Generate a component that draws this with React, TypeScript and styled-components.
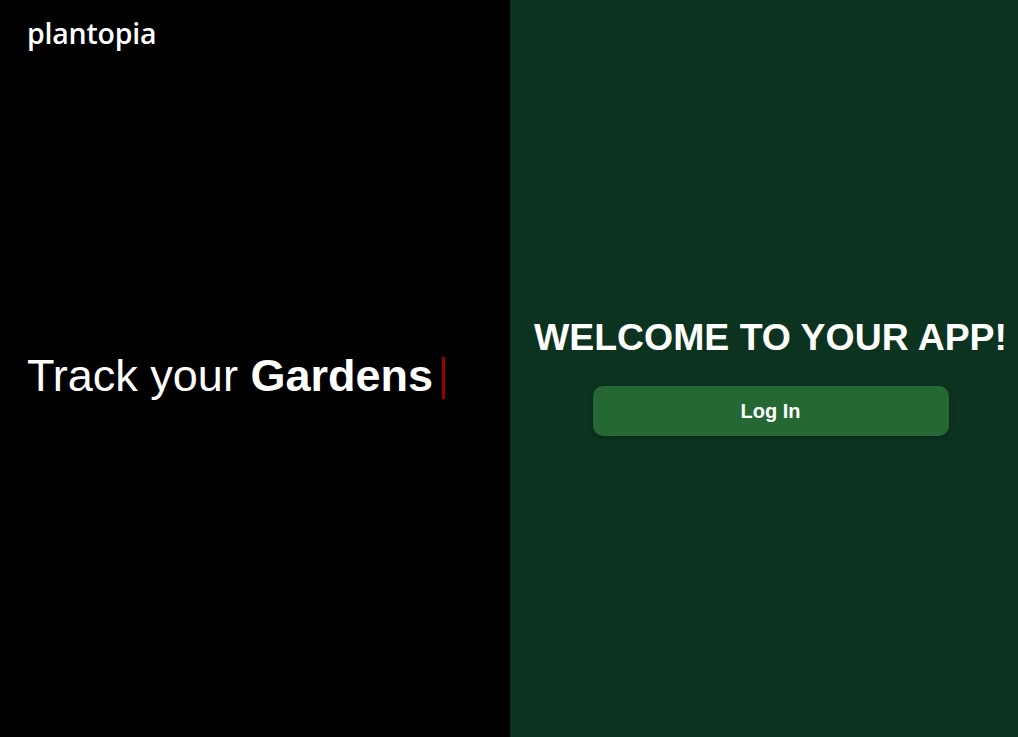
import * as React from 'react';
import styled, { createGlobalStyle } from 'styled-components';

const GlobalStyle = createGlobalStyle`
  html, body {
    margin: 0;
    padding: 0;
    overflow: hidden;
  }
`;

const Page = styled.div`
  display: flex;
  width: 100vw;
  height: 100vh;
`;

const LeftPanel = styled.div`
  display: flex;
  flex-direction: column;
  width: 510px;
  height: 100%;
  padding: 13px 27px;
  box-sizing: border-box;
  background-color: #000;
  color: #fff;
`;

const Logo = styled.div`
  font-family: 'Open Sans', sans-serif;
  font-size: 28.5px;
  font-weight: 600;
  letter-spacing: -0.2px;
  line-height: 40px;
`;

const HeroWrap = styled.div`
  display: flex;
  align-items: center;
  flex: 1;
  padding-bottom: 26px;
`;

const HeroText = styled.h1`
  display: flex;
  align-items: center;
  margin: 0;
  font-family: 'Liberation Sans', Arial, sans-serif;
  font-size: 45px;
  font-weight: 400;
  white-space: pre;
`;

const Bold = styled.b`
  font-weight: 700;
`;

const Cursor = styled.span`
  display: inline-block;
  width: 3px;
  height: 42px;
  margin-left: 9px;
  margin-top: 4px;
  background-color: #9b0000;
`;

const RightPanel = styled.div`
  display: flex;
  flex-direction: column;
  justify-content: center;
  align-items: center;
  flex: 1;
  height: 100%;
  padding-left: 13px;
  padding-top: 15px;
  box-sizing: border-box;
  background-color: #0b3320;
  color: #fff;
`;

const Title = styled.h2`
  margin: 0 0 27px;
  font-family: 'Liberation Sans', Arial, sans-serif;
  font-size: 37.4px;
  font-weight: 700;
  white-space: nowrap;
`;

const LoginButton = styled.button`
  width: 356px;
  height: 50px;
  border: none;
  border-radius: 10px;
  background-color: #256834;
  color: #fff;
  font-family: 'Liberation Sans', Arial, sans-serif;
  font-size: 20px;
  font-weight: 700;
  box-shadow: 0 2px 6px rgba(0, 0, 0, 0.25);
  cursor: pointer;
`;

export default function App() {
  return (
    <>
      <GlobalStyle />
      <Page>
        <LeftPanel>
          <Logo>plantopia</Logo>
          <HeroWrap>
            <HeroText>
              Track your <Bold>Gardens</Bold>
              <Cursor />
            </HeroText>
          </HeroWrap>
        </LeftPanel>
        <RightPanel>
          <Title>WELCOME TO YOUR APP!</Title>
          <LoginButton>Log In</LoginButton>
        </RightPanel>
      </Page>
    </>
  );
}
